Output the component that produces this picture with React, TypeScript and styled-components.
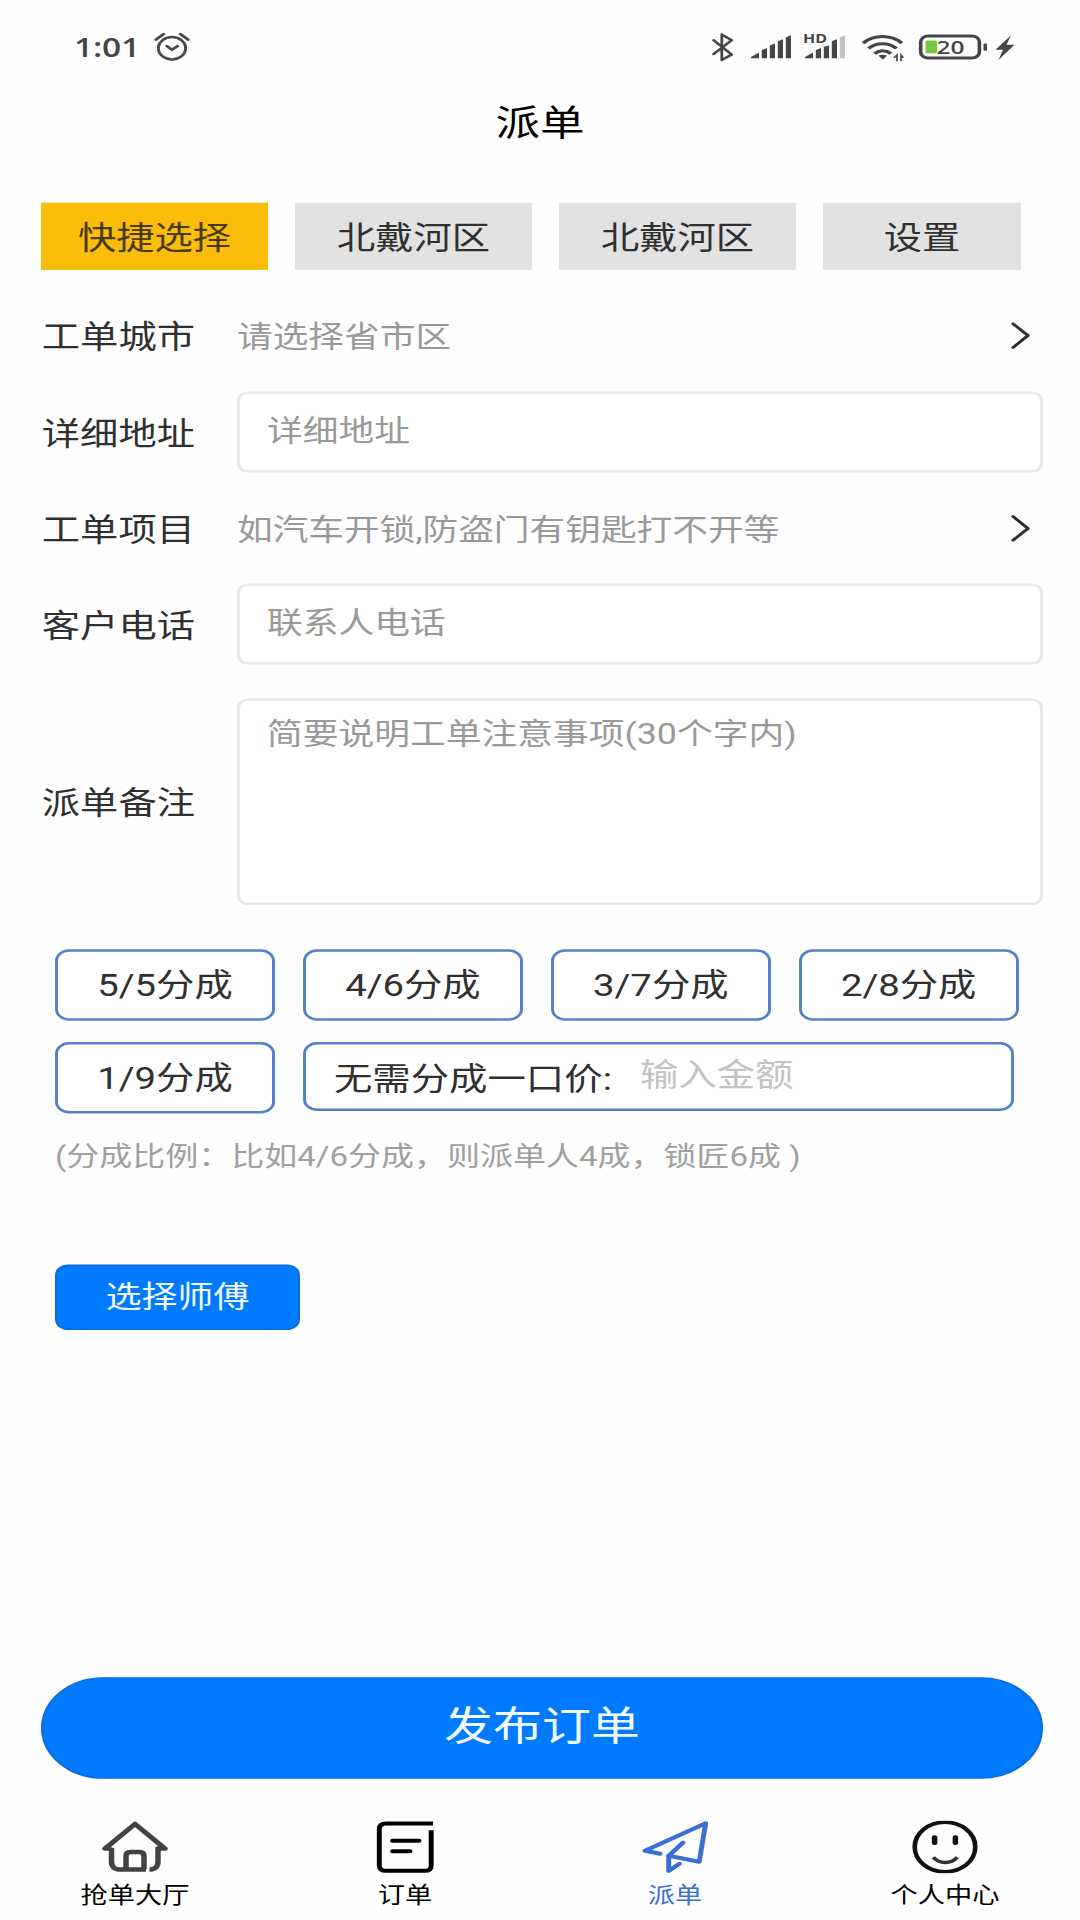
import React from "react";
import styled, { createGlobalStyle } from "styled-components";

const Global = createGlobalStyle`
  * { box-sizing: border-box; }
  html, body { margin: 0; padding: 0; background: #fefefe; }
  button, input, textarea { font: inherit; margin: 0; outline: none; appearance: none; }
`;

const Viewport = styled.div`
  width: 1080px;
  height: 1920px;
  overflow: hidden;
  background: #fefefe;
`;

/* The phone page is 1080x2340 and is fitted into the 1920px tall viewport. */
const Phone = styled.div`
  width: 1080px;
  height: 2340px;
  display: flex;
  flex-direction: column;
  transform: scaleY(0.820513);
  transform-origin: 0 0;
  font-family: Roboto, "Noto Sans CJK SC", sans-serif;
  color: #303030;
`;

const StatusBar = styled.header`
  height: 114px;
  padding: 0 65.5px 0 74px;
  display: flex;
  align-items: center;
  justify-content: space-between;
  color: #454545;
`;

const StatusGroup = styled.div`
  display: flex;
  align-items: center;
  svg { display: block; overflow: visible; }
`;

const StatusSlot = styled.span<{ $gap: number }>`
  display: block;
  margin-left: ${(p) => p.$gap}px;
`;

const Clock = styled.span`
  font-family: "Open Sans", "Noto Sans", sans-serif;
  font-weight: 650;
  font-size: 33.5px;
  line-height: 40px;
  letter-spacing: -0.2px;
  width: 63px;
`;

const Title = styled.h1`
  margin: 6.5px 0 0;
  height: 60px;
  line-height: 60px;
  text-align: center;
  font-size: 44.5px;
  font-weight: 400;
  color: #000;
`;

const Tabs = styled.nav`
  margin: 66px 0 0 41px;
  display: flex;
  gap: 27px;
`;

const Tab = styled.button<{ $width: number; $active?: boolean }>`
  width: ${(p) => p.$width}px;
  height: 82px;
  padding: 4px 0 0;
  border: 0;
  font-size: 38.3px;
  line-height: 78px;
  color: ${(p) => (p.$active ? "#4a3a10" : "#303030")};
  background: ${(p) => (p.$active ? "#fabd0a" : "#e2e2e2")};
`;

const Form = styled.main`
  padding: 32px 37px 0 41px;
  display: flex;
  flex-direction: column;
`;

const Row = styled.div<{ $height: number; $gap?: number }>`
  display: grid;
  grid-template-columns: 196px 1fr;
  align-items: center;
  height: ${(p) => p.$height}px;
  margin-top: ${(p) => p.$gap ?? 0}px;
`;

const Label = styled.label`
  padding: 5px 0 0 0.8px;
  font-size: 38.3px;
  line-height: 50px;
  white-space: nowrap;
`;

const Picker = styled.div`
  display: flex;
  align-items: center;
  justify-content: space-between;
  padding-right: 13px;
  font-size: 35.7px;
  line-height: 50px;
  color: #999;
  svg { display: block; }
`;

const PickerText = styled.span`
  padding-top: 4px;
`;

const Field = styled.input`
  width: 100%;
  height: 99px;
  padding: 0 27px 2px;
  border: 3px solid #e6e6e6;
  border-radius: 11px;
  background: #fff;
  font-size: 35.75px;
  &::placeholder { color: #999; opacity: 1; }
`;

const Notes = styled.textarea`
  display: block;
  width: 100%;
  height: 252px;
  padding: 16px 27px;
  border: 3px solid #e6e6e6;
  border-radius: 11px;
  background: #fff;
  resize: none;
  font-size: 35.75px;
  line-height: 50px;
  &::placeholder { color: #999; opacity: 1; }
`;

const Shares = styled.section`
  margin: 54px 0 0 14px;
  display: grid;
  grid-template-columns: repeat(4, 220px);
  column-gap: 27.9px;
  row-gap: 26px;
  align-items: start;
`;

const Share = styled.button`
  height: 87px;
  padding: 2px 0 0;
  border: 3px solid #5282c8;
  border-radius: 14px;
  background: #fff;
  color: #303030;
  font-size: 38.3px;
  line-height: 78px;
`;

const FixedPrice = styled.label`
  grid-column: 2 / 5;
  width: 711px;
  height: 84px;
  display: flex;
  align-items: center;
  padding: 0 26px 1px 28px;
  border: 3px solid #5282c8;
  border-radius: 14px;
  background: #fff;
  font-size: 38.4px;
  white-space: nowrap;
`;

const PriceInput = styled.input`
  flex: 1;
  min-width: 0;
  padding: 0 0 3px;
  margin-left: 28px;
  border: 0;
  background: transparent;
  &::placeholder { color: #c3c3c3; opacity: 1; }
`;

const Hint = styled.p`
  margin: 29.5px 0 0 14px;
  font-size: 33px;
  line-height: 48px;
  color: #a0a0a0;
  white-space: pre;
`;

const PickWorker = styled.button`
  margin: 107px 0 0 14px;
  width: 245px;
  height: 80px;
  padding: 0 0 1px;
  border: 2px solid #0a6bdc;
  border-radius: 13px;
  background: #007aff;
  color: #f2faff;
  font-size: 35.9px;
  line-height: 70px;
`;

const Footer = styled.footer`
  margin-top: auto;
`;

const Submit = styled.button`
  display: block;
  width: 1002px;
  height: 124px;
  margin: 0 0 0 41px;
  padding: 0 0 3px;
  border: 2px solid #0a6bdc;
  border-radius: 62px;
  background: #007aff;
  color: #f2faff;
  font-size: 49px;
  line-height: 110px;
`;

const NavBar = styled.nav`
  height: 172px;
  padding-top: 51px;
  display: grid;
  grid-template-columns: repeat(4, 1fr);
`;

const NavItem = styled.a<{ $active?: boolean }>`
  display: flex;
  flex-direction: column;
  align-items: center;
  font-size: 27.2px;
  line-height: 36px;
  color: ${(p) => (p.$active ? "#3a6fd4" : "#000")};
  svg { display: block; margin-bottom: 9px; }
`;

const Chevron = () => (
  <svg width="19" height="34" viewBox="0 0 19 34" fill="none" stroke="#303030" strokeWidth="3.3" strokeLinecap="round" strokeLinejoin="round">
    <path d="M2 2.5 17 17 2 31.5" />
  </svg>
);

const AlarmIcon = () => (
  <svg width="36" height="36" viewBox="0 0 36 36" fill="none" stroke="#4a4a4a" strokeWidth="3" strokeLinecap="round" strokeLinejoin="round">
    <circle cx="18" cy="19.8" r="13.6" />
    <path d="m12.7 17 5.3 4.6 5.7-4.6M1.8 9.4 9.7 2.4M34.2 9.4l-7.9-7" />
  </svg>
);

const BluetoothIcon = () => (
  <svg width="22" height="36" viewBox="712 39 22 36" fill="none" stroke="#454545" strokeWidth="2.8" strokeLinejoin="round" strokeLinecap="round">
    <path d="m713.5 49 18.3 17.5-10 6.7V42l10 7-18.3 17" />
  </svg>
);

const bars = (x: number, lastFill: string) => {
  const tops = [64, 58.5, 53, 47.8, 43];
  return tops.map((top, i) => {
    const left = i === 0 ? x : x + 2.8 + i * 8;
    const right = x + 8 + i * 8;
    const rise = i === 0 ? 5.5 : 2.5;
    return (
      <path
        key={i}
        fill={i === 4 ? lastFill : "#454545"}
        d={`M${left} 71V${top + rise}L${right} ${top}V71Z`}
      />
    );
  });
};

const SignalIcon = () => (
  <svg width="41" height="36" viewBox="751 39 41 36">{bars(751, "#454545")}</svg>
);

const HdSignalIcon = () => (
  <svg width="42" height="36" viewBox="804 39 42 36">
    <text x="803" y="52.3" fontFamily="Open Sans, Noto Sans, sans-serif" fontWeight="700" fontSize="14.5" textLength="24" lengthAdjust="spacingAndGlyphs" fill="#454545">HD</text>
    <g>{bars(805, "#c4c4c4").map((b, i) => (i === 2 ? <path key="mid" fill="#454545" d="M823.8 71V57l5.2-1.5V71Z" /> : b))}</g>
  </svg>
);

const WifiIcon = () => (
  <svg width="42" height="36" viewBox="861.5 39 42 36" fill="none" stroke="#454545" strokeWidth="3.9">
    <path d="M862.5 52.5c11-10.7 28-10.7 39 0M868 59c8-7.6 20-7.6 28 0M874 65.3c5-4.4 11.500-4.4 16.500 0" />
    <path d="M878 68c2.500-1.800 6-1.800 8.500 0l-4.200 4.500Z" fill="#454545" stroke="none" />
    <path d="m893.500 70.500 3-3.500v7.500M900.500 74.500V67l2.500 3.500" strokeWidth="1.700" />
  </svg>
);

const BatteryIcon = () => (
  <svg width="69" height="36" viewBox="919 39 69 36">
    <rect x="920.7" y="43.8" width="58.7" height="27" rx="7.5" fill="none" stroke="#454545" strokeWidth="3.6" />
    <rect x="925.5" y="49.5" width="11.5" height="15.5" rx="2" fill="#76c83c" />
    <text x="936.5" y="65.8" fontFamily="Open Sans, Noto Sans, sans-serif" fontWeight="600" fontSize="22" textLength="28" lengthAdjust="spacingAndGlyphs" fill="#454545">20</text>
    <rect x="983.5" y="53" width="3.5" height="9" rx="1" fill="#454545" />
  </svg>
);

const BoltIcon = () => (
  <svg width="19" height="36" viewBox="995.5 39 19 36" fill="#454545">
    <path d="M1010.5 43 995 60.500h7.500L998 73 1014 54.500h-8Z" />
  </svg>
);

const HomeIcon = () => (
  <svg width="66" height="64" viewBox="0 0 66 64" fill="none" stroke="#424242" strokeWidth="5.5" strokeLinejoin="round">
    <path d="M9.5 34H3L33 4 63 34h-7v16c0 6-3 9.5-8.5 9.5" />
    <path d="M9.5 33v17c0 6 3 9.5 8.5 9.5h26M24 59V43c0-3.5 1.500-5 4.500-5h9c3 0 4.500 1.500 4.500 5v16" />
  </svg>
);

const OrdersIcon = () => (
  <svg width="66" height="64" viewBox="0 0 66 64" fill="none" stroke="#000" strokeWidth="4.9">
    <path d="M61 3.4H14c-4.500 0-6.700 2.300-6.700 6.800v44c0 4.500 2.200 6.900 6.700 6.900h38.500c4.500 0 6.700-2.400 6.700-6.900V11.500" />
    <path d="M20.5 24.3h26.5M20.5 37.2h17.5" strokeLinecap="round" />
  </svg>
);

const PlaneIcon = () => (
  <svg width="66" height="64" viewBox="0 0 66 64" fill="none" stroke="#3a6fd4" strokeWidth="4.9" strokeLinecap="round" strokeLinejoin="round">
    <path d="M18 40.2 3 36.6 63.7 3.2l-6.5 46.8-30.5-7.3" />
    <path d="M41 26.8 26.7 42.7v18.500l10.800-8.700" />
  </svg>
);

const SmileIcon = () => (
  <svg width="66" height="64" viewBox="0 0 66 64" fill="none" stroke="#111" strokeWidth="4.6" strokeLinecap="round">
    <circle cx="33" cy="32" r="30.3" />
    <path d="M22.6 20.5v6.5M43.4 20.5v6.5" strokeWidth="5.5" />
    <path d="M21.3 44.5c6.5 8.5 17.5 8.5 24 0" strokeWidth="4.2" stroke="#333" strokeLinecap="butt" />
  </svg>
);

const tabs = [
  { text: "快捷选择", width: 227, active: true },
  { text: "北戴河区", width: 237 },
  { text: "北戴河区", width: 237 },
  { text: "设置", width: 198 },
];

const shares = ["5/5分成", "4/6分成", "3/7分成", "2/8分成", "1/9分成"];

const navItems = [
  { text: "抢单大厅", icon: <HomeIcon /> },
  { text: "订单", icon: <OrdersIcon /> },
  { text: "派单", icon: <PlaneIcon />, active: true },
  { text: "个人中心", icon: <SmileIcon /> },
];

export default function App() {
  return (
    <Viewport>
      <Global />
      <Phone>
        <StatusBar>
          <StatusGroup>
            <Clock>1:01</Clock>
            <StatusSlot $gap={17}><AlarmIcon /></StatusSlot>
          </StatusGroup>
          <StatusGroup>
            <StatusSlot $gap={0}><BluetoothIcon /></StatusSlot>
            <StatusSlot $gap={17}><SignalIcon /></StatusSlot>
            <StatusSlot $gap={12}><HdSignalIcon /></StatusSlot>
            <StatusSlot $gap={15.5}><WifiIcon /></StatusSlot>
            <StatusSlot $gap={15.5}><BatteryIcon /></StatusSlot>
            <StatusSlot $gap={7.5}><BoltIcon /></StatusSlot>
          </StatusGroup>
        </StatusBar>
        <Title>派单</Title>
        <Tabs>
          {tabs.map((t, i) => (
            <Tab key={i} $width={t.width} $active={t.active}>{t.text}</Tab>
          ))}
        </Tabs>
        <Form>
          <Row $height={96}>
            <Label>工单城市</Label>
            <Picker><PickerText>请选择省市区</PickerText><Chevron /></Picker>
          </Row>
          <Row $height={99} $gap={20}>
            <Label>详细地址</Label>
            <Field placeholder="详细地址" />
          </Row>
          <Row $height={96} $gap={20}>
            <Label>工单项目</Label>
            <Picker><PickerText>如汽车开锁,防盗门有钥匙打不开等</PickerText><Chevron /></Picker>
          </Row>
          <Row $height={99} $gap={19}>
            <Label>客户电话</Label>
            <Field placeholder="联系人电话" />
          </Row>
          <Row $height={252} $gap={41}>
            <Label>派单备注</Label>
            <Notes placeholder="简要说明工单注意事项(30个字内)" />
          </Row>
          <Shares>
            {shares.map((s) => <Share key={s}>{s}</Share>)}
            <FixedPrice>
              无需分成一口价:
              <PriceInput placeholder="输入金额" />
            </FixedPrice>
          </Shares>
          <Hint>(分成比例：比如4/6分成，则派单人4成，锁匠6成 )</Hint>
          <PickWorker>选择师傅</PickWorker>
        </Form>
        <Footer>
          <Submit>发布订单</Submit>
          <NavBar>
            {navItems.map((n) => (
              <NavItem key={n.text} $active={n.active}>
                {n.icon}
                {n.text}
              </NavItem>
            ))}
          </NavBar>
        </Footer>
      </Phone>
    </Viewport>
  );
}
